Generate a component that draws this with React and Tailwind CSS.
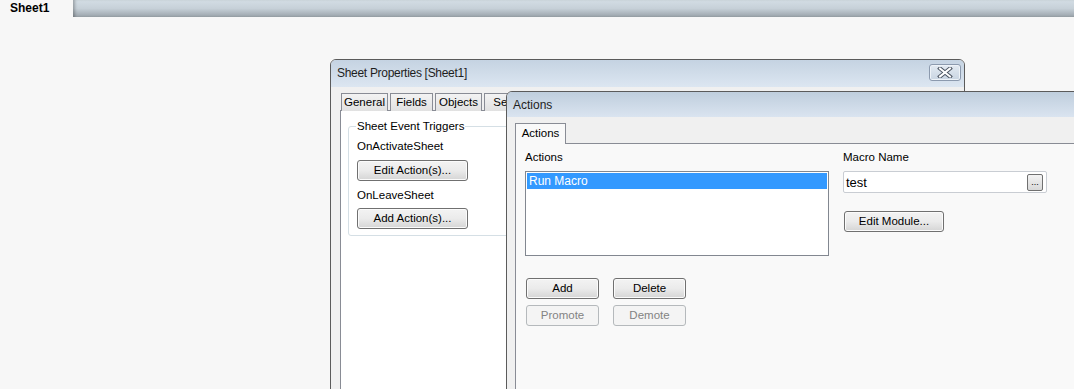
const btn =
  "flex items-center justify-center rounded-[3px] border border-[#707070] bg-linear-to-b from-[#f3f3f3] via-[#ebebeb] to-[#d5d5d5] shadow-[inset_0_0_0_1px_#fbfbfb] text-[11.5px] text-black leading-none";
const btnDisabled =
  "flex items-center justify-center rounded-[3px] border border-[#b5b9bc] bg-[#f4f4f4] text-[11.5px] text-[#838383] leading-none";

function CloseButton() {
  return (
    <div className="flex h-[17px] w-[32px] items-center justify-center rounded-[3px] border border-[#8c9aae] bg-linear-to-b from-[#e3eaf2] to-[#c9d5e2] shadow-[inset_0_0_0_1px_#eef3f8]">
      <svg width="16" height="11" viewBox="0 0 16 11">
        <path d="M3 1.5 L13 9.5 M13 1.5 L3 9.5" stroke="#4a5360" strokeWidth="4" strokeLinecap="square" />
        <path d="M3 1.5 L13 9.5 M13 1.5 L3 9.5" stroke="#ffffff" strokeWidth="2" strokeLinecap="square" />
      </svg>
    </div>
  );
}

function Tab({ label, w }) {
  return (
    <div
      className={`flex h-[18px] items-center justify-center border border-b-0 border-[#898c95] bg-linear-to-b from-[#f3f3f3] to-[#e1e1e1] text-[11.5px] text-black ${w}`}
    >
      {label}
    </div>
  );
}

export default function App() {
  return (
    <div className="relative h-[389px] w-[1074px] overflow-hidden bg-[#f7f7f7] font-['Liberation_Sans',Arial,sans-serif] text-black">
      {/* top sheet tab bar */}
      <div className="flex h-[17px]">
        <div className="w-[73px] pl-[10px] text-[12px] font-bold leading-[17px]">Sheet1</div>
        <div className="flex-1 bg-linear-to-b from-[#d4dee5] via-[#c6d0d8] to-[#9aa3aa] shadow-[inset_3px_0_3px_-1px_rgba(0,0,0,0.25)]" />
      </div>

      {/* Sheet Properties window */}
      <div className="absolute left-[330px] top-[59px] z-10 flex h-[340px] w-[635px] flex-col rounded-t-[6px] border border-[#5b5b5b] bg-[#f0f0f0]">
        <div className="flex h-[27px] shrink-0 items-start justify-between rounded-t-[5px] bg-linear-to-b from-[#c5d3e2] to-[#dce6f1] pl-[6px] pr-[3px]">
          <span className="pt-[6px] text-[12px] leading-[14px] tracking-[-0.3px] text-[#1e1e1e]">
            Sheet Properties [Sheet1]
          </span>
          <div className="pt-[4px]">
            <CloseButton />
          </div>
        </div>
        <div className="flex flex-1 flex-col pl-[9px] pr-[8px] pt-[6px]">
          <div className="relative z-10 -mb-px flex gap-[2px] pl-[1px]">
            <Tab label="General" w="w-[47px]" />
            <Tab label="Fields" w="w-[43px]" />
            <Tab label="Objects" w="w-[47px]" />
            <Tab label="Security" w="w-[60px]" />
          </div>
          <div className="flex-1 border border-[#898c95] bg-white pl-[7px] pr-[8px] pt-[8px]">
            <fieldset className="rounded-[3px] border border-[#d5dfe5] pb-[6px] pl-[8px] text-[11.5px]">
              <legend className="-ml-[1px] px-[1px] leading-[14px]">Sheet Event Triggers</legend>
              <div className="mt-[6px] leading-[14px]">OnActivateSheet</div>
              <div className={`${btn} mt-[7px] h-[21px] w-[111px]`}>Edit Action(s)...</div>
              <div className="mt-[7px] leading-[14px]">OnLeaveSheet</div>
              <div className={`${btn} mt-[6px] h-[21px] w-[111px]`}>Add Action(s)...</div>
            </fieldset>
          </div>
        </div>
      </div>

      {/* Actions window */}
      <div className="absolute left-[506px] top-[91px] z-20 flex h-[310px] w-[600px] flex-col rounded-tl-[6px] border border-[#5b5b5b] bg-[#f0f0f0]">
        <div className="flex h-[25px] shrink-0 items-center rounded-tl-[5px] bg-linear-to-b from-[#bfcedd] to-[#dae4f0] pl-[6px]">
          <span className="text-[12px] leading-[14px] text-[#1e1e1e]">Actions</span>
        </div>
        <div className="flex flex-1 flex-col pl-[8px] pt-[6px]">
          <div className="relative z-10 -mb-px flex">
            <div className="flex h-[21px] w-[51px] items-center justify-center border border-b-0 border-[#898c95] bg-[#f9f9f9] text-[11.5px]">
              Actions
            </div>
          </div>
          <div className="flex flex-1 gap-[14px] border border-[#898c95] bg-[#f9f9f9] pl-[9px] pt-[6px]">
            <div className="flex w-[304px] flex-col">
              <div className="text-[11.5px] leading-[15px]">Actions</div>
              <div className="mt-[6px] h-[85px] border border-[#828790] bg-white p-px">
                <div className="h-[16px] bg-[#3399ff] pl-[2px] text-[12px] leading-[16px] text-white">Run Macro</div>
              </div>
              <div className="ml-px mt-[22px] flex gap-[14px]">
                <div className={`${btn} h-[21px] w-[73px]`}>Add</div>
                <div className={`${btn} h-[21px] w-[73px]`}>Delete</div>
              </div>
              <div className="ml-px mt-[6px] flex gap-[14px]">
                <div className={`${btnDisabled} h-[21px] w-[73px]`}>Promote</div>
                <div className={`${btnDisabled} h-[21px] w-[73px]`}>Demote</div>
              </div>
            </div>
            <div className="flex w-[204px] flex-col">
              <div className="text-[11.5px] leading-[15px]">Macro Name</div>
              <div className="mt-[6px] flex h-[22px] items-center justify-between rounded-[2px] border border-[#c9cdd3] bg-white pl-[2px] pr-[3px]">
                <span className="text-[13px] leading-none">test</span>
                <div className="flex h-[17px] w-[16px] items-end justify-center rounded-[2px] border border-[#707070] bg-linear-to-b from-[#f3f3f3] to-[#d8d8d8] pb-[3px] text-[9px] leading-none">
                  ...
                </div>
              </div>
              <div className={`${btn} ml-px mt-[18px] h-[21px] w-[100px]`}>Edit Module...</div>
            </div>
          </div>
        </div>
      </div>
    </div>
  );
}
